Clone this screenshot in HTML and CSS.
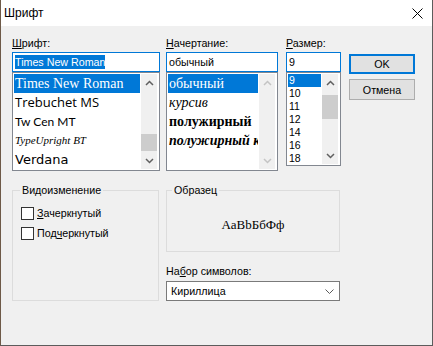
FILE: index.html
```html
<!DOCTYPE html>
<html lang="ru">
<head>
    <meta charset="UTF-8">
    <meta name="viewport" content="width=device-width, initial-scale=1.0">
    <title>Шрифт</title>
    <link rel="stylesheet" href="styles.css">
</head>
<body>
    <div class="window">
        <div class="titlebar">
            <span class="title">Шрифт</span>
            <svg class="close" width="11" height="11" viewBox="0 0 11 11">
                <path d="M0.5 0.5L10.5 10.5M10.5 0.5L0.5 10.5" stroke="#000" stroke-width="1" fill="none"/>
            </svg>
        </div>

        <div class="content">
            <div class="top-row">
                <!-- Шрифт -->
                <div class="col col-font">
                    <label class="lbl"><u>Ш</u>рифт:</label>
                    <div class="field"><span class="sel">Times New Roman</span></div>
                    <div class="list">
                        <div class="items">
                            <div class="item active f-times">Times New Roman</div>
                            <div class="item f-trebuchet">Trebuchet MS</div>
                            <div class="item f-twcen">Tw Cen MT</div>
                            <div class="item f-script">TypeUpright BT</div>
                            <div class="item f-verdana">Verdana</div>
                        </div>
                        <div class="scrollbar">
                            <div class="arrow"><svg width="9" height="6" viewBox="0 0 9 6"><path d="M1 5L4.5 1.5L8 5" fill="none" stroke="#606060" stroke-width="1.5"/></svg></div>
                            <div class="track"><div class="thumb thumb-font"></div></div>
                            <div class="arrow"><svg width="9" height="6" viewBox="0 0 9 6"><path d="M1 1L4.5 4.5L8 1" fill="none" stroke="#606060" stroke-width="1.5"/></svg></div>
                        </div>
                    </div>
                </div>

                <!-- Начертание -->
                <div class="col col-style">
                    <label class="lbl"><u>Н</u>ачертание:</label>
                    <div class="field">обычный</div>
                    <div class="list">
                        <div class="items">
                            <div class="item active f-times">обычный</div>
                            <div class="item f-times italic">курсив</div>
                            <div class="item f-times bold">полужирный</div>
                            <div class="item f-times bold italic">полужирный курсив</div>
                        </div>
                        <div class="scrollbar">
                            <div class="arrow"><svg width="9" height="6" viewBox="0 0 9 6"><path d="M1 5L4.5 1.5L8 5" fill="none" stroke="#c4c4c4" stroke-width="1.5"/></svg></div>
                            <div class="track"></div>
                            <div class="arrow"><svg width="9" height="6" viewBox="0 0 9 6"><path d="M1 1L4.5 4.5L8 1" fill="none" stroke="#c4c4c4" stroke-width="1.5"/></svg></div>
                        </div>
                    </div>
                </div>

                <!-- Размер -->
                <div class="col col-size">
                    <label class="lbl"><u>Р</u>азмер:</label>
                    <div class="field">9</div>
                    <div class="list list-size">
                        <div class="items">
                            <div class="item active">9</div>
                            <div class="item">10</div>
                            <div class="item">11</div>
                            <div class="item">12</div>
                            <div class="item">14</div>
                            <div class="item">16</div>
                            <div class="item">18</div>
                        </div>
                        <div class="scrollbar">
                            <div class="arrow"><svg width="9" height="6" viewBox="0 0 9 6"><path d="M1 5L4.5 1.5L8 5" fill="none" stroke="#606060" stroke-width="1.5"/></svg></div>
                            <div class="track"><div class="thumb thumb-size"></div></div>
                            <div class="arrow"><svg width="9" height="6" viewBox="0 0 9 6"><path d="M1 1L4.5 4.5L8 1" fill="none" stroke="#606060" stroke-width="1.5"/></svg></div>
                        </div>
                    </div>
                </div>

                <div class="col col-buttons">
                    <button class="btn btn-ok">OK</button>
                    <button class="btn">Отмена</button>
                </div>
            </div>

            <div class="bottom-row">
                <fieldset class="group group-effects">
                    <legend>Видоизменение</legend>
                    <div class="check"><span class="box"></span><u>З</u>ачеркнутый</div>
                    <div class="check"><span class="box"></span>Под<u>ч</u>еркнутый</div>
                </fieldset>

                <div class="col-charset">
                    <fieldset class="group group-sample">
                        <legend>Образец</legend>
                        <div class="sample">AaBbБбФф</div>
                    </fieldset>
                    <label class="lbl lbl-charset">На<u>б</u>ор символов:</label>
                    <div class="select">
                        <span>Кириллица</span>
                        <svg width="9" height="5" viewBox="0 0 9 5"><path d="M0.5 0.5L4.5 4.5L8.5 0.5" fill="none" stroke="#5a5a5a" stroke-width="1"/></svg>
                    </div>
                </div>
            </div>
        </div>
    </div>
</body>
</html>
```

FILE: styles.css
```css
* {
    box-sizing: border-box;
}
body {
    margin: 0;
    font-family: "Liberation Sans", Arial, sans-serif;
    font-size: 10.7px;
    color: #000;
}
.window {
    width: 433px;
    height: 346px;
    background-color: #f0f0f0;
    border-left: 1px solid #6e5a48;
    border-right: 1px solid #5c5c5c;
    border-bottom: 1px solid #5c5c5c;
}
.titlebar {
    height: 26px;
    background-color: #ffffff;
    display: flex;
    align-items: center;
    justify-content: space-between;
    padding: 0 9px 0 3px;
}
.title {
    font-size: 12px;
}
.content {
    padding: 10px 0 0 11px;
}

/* верхняя часть */
.top-row {
    display: flex;
}
.col-font {
    width: 148px;
    margin-right: 6px;
}
.col-style {
    width: 112px;
    margin-right: 8px;
}
.col-size {
    width: 55px;
    margin-right: 8px;
}
.col-buttons {
    width: 66px;
    padding-top: 18px;
}
.lbl {
    display: block;
    height: 16px;
    line-height: 15px;
    white-space: nowrap;
}
.field {
    height: 20px;
    background-color: #ffffff;
    border: 1px solid #0078d7;
    padding: 0 2px;
    line-height: 18px;
    white-space: nowrap;
    overflow: hidden;
}
.sel {
    display: inline-block;
    background-color: #0078d7;
    color: #ffffff;
    line-height: 14px;
}
.list {
    height: 99px;
    background-color: #ffffff;
    border: 1px solid #828790;
    padding: 1px 2px 1px 1px;
    display: flex;
}
.list-size {
    height: 94px;
}
.items {
    flex: 1;
    overflow: hidden;
}
.item {
    height: 19px;
    line-height: 19px;
    padding-left: 1px;
    white-space: nowrap;
    overflow: hidden;
}
.item.active {
    background-color: #0078d7;
    color: #ffffff;
}
.list-size .item {
    height: 13px;
    line-height: 13px;
    font-size: 10.5px;
}
.f-times {
    font-family: "Liberation Serif", "Times New Roman", serif;
    font-size: 14px;
}
.f-trebuchet {
    font-family: "Open Sans", sans-serif;
    font-size: 13px;
}
.f-twcen {
    font-family: Lato, sans-serif;
    font-size: 12px;
}
.f-script {
    font-family: "Liberation Serif", serif;
    font-style: italic;
    font-size: 11px;
}
.f-verdana {
    font-family: "DejaVu Sans", Verdana, sans-serif;
    font-size: 13px;
}
.bold {
    font-weight: bold;
}
.italic {
    font-style: italic;
}
.scrollbar {
    width: 16px;
    margin-left: 1px;
    background-color: #f0f0f0;
    display: flex;
    flex-direction: column;
}
.arrow {
    height: 17px;
    display: flex;
    align-items: center;
    justify-content: center;
}
.track {
    flex: 1;
}
.thumb {
    background-color: #cdcdcd;
}
.thumb-font {
    margin-top: 43px;
    height: 17px;
}
.thumb-size {
    margin-top: 4px;
    height: 24px;
}
.btn {
    display: block;
    width: 66px;
    height: 20px;
    padding: 0;
    background-color: #e1e1e1;
    border: 1px solid #adadad;
    font: inherit;
    color: #000;
    text-align: center;
}
.btn-ok {
    border: 2px solid #0078d7;
}
.btn + .btn {
    margin-top: 5px;
    height: 21px;
}

/* нижняя часть */
.bottom-row {
    display: flex;
    margin-top: 12px;
}
.group {
    margin: 0;
    border: 1px solid #dcdcdc;
    min-width: 0;
}
.group legend {
    padding: 0 2px;
    line-height: 15px;
}
.group-effects {
    width: 147px;
    margin-right: 7px;
    padding: 5px 7px 55px 7px;
}
.check {
    height: 20px;
    display: flex;
    align-items: center;
    white-space: nowrap;
}
.box {
    width: 13px;
    height: 13px;
    margin: 0 3px 0 1px;
    background-color: #ffffff;
    border: 1px solid #333333;
}
.col-charset {
    width: 174px;
}
.group-sample {
    padding: 0 5px;
}
.sample {
    height: 53px;
    display: flex;
    align-items: center;
    justify-content: center;
    font-family: "Liberation Serif", "Times New Roman", serif;
    font-size: 13px;
}
.lbl-charset {
    margin-top: 12px;
}
.select {
    height: 20px;
    margin-top: 1px;
    background-color: #ffffff;
    border: 1px solid #7a7a7a;
    padding: 0 5px 0 4px;
    display: flex;
    align-items: center;
    justify-content: space-between;
}
```
